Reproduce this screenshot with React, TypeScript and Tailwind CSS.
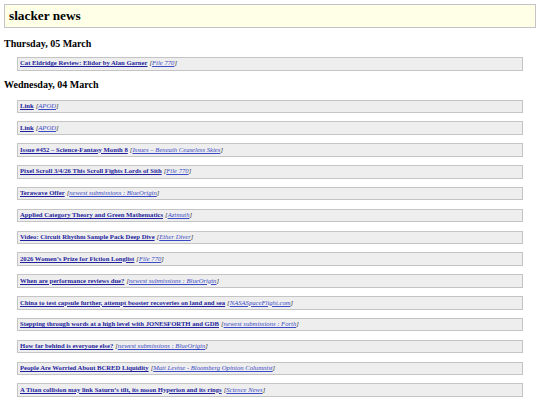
const thursday = [
  { title: "Cat Eldridge Review: Elidor by Alan Garner", source: "File 770" },
]

const wednesday = [
  { title: "Link", source: "APOD" },
  { title: "Link", source: "APOD" },
  { title: "Issue #452 – Science-Fantasy Month 8", source: "Issues – Beneath Ceaseless Skies" },
  { title: "Pixel Scroll 3/4/26 This Scroll Fights Lords of Sith", source: "File 770" },
  { title: "Terawave Offer", source: "newest submissions : BlueOrigin" },
  { title: "Applied Category Theory and Green Mathematics", source: "Azimuth" },
  { title: "Video: Circuit Rhythm Sample Pack Deep Dive", source: "Ether Diver" },
  { title: "2026 Women’s Prize for Fiction Longlist", source: "File 770" },
  { title: "When are performance reviews due?", source: "newest submissions : BlueOrigin" },
  { title: "China to test capsule further, attempt booster recoveries on land and sea", source: "NASASpaceFlight.com" },
  { title: "Stepping through words at a high level with JONESFORTH and GDB", source: "newest submissions : Forth" },
  { title: "How far behind is everyone else?", source: "newest submissions : BlueOrigin" },
  { title: "People Are Worried About BCRED Liquidity", source: "Matt Levine - Bloomberg Opinion Columnist" },
  { title: "A Titan collision may link Saturn’s tilt, its moon Hyperion and its rings", source: "Science News" },
]

function Item({ title, source }: { title: string; source: string }) {
  return (
    <div className="mx-[13px] h-[13.5px] flex items-center border border-[#c4c4c4] bg-[#eeeeee] pl-[2px] text-[6.67px] leading-none whitespace-nowrap overflow-hidden">
      <a href="#" className="font-bold text-[#1f1f9e] underline">{title}</a>
      <span className="italic text-[#333] ml-[2px]">
        [<a href="#" className="text-[#3a4ac4] underline">{source}</a>]
      </span>
    </div>
  )
}

export default function App() {
  return (
    <div className="w-[540px] h-[405px] overflow-hidden bg-white px-[4px] pt-[4px] font-['Liberation_Serif','Times_New_Roman',serif] text-black">
      <div className="h-[24px] border border-[#c4c4c4] bg-[#ffffe8] flex items-center pl-[4px]">
        <h1 className="text-[13.3px] font-bold leading-none">slacker news</h1>
      </div>

      <h2 className="mt-[10px] h-[12px] flex items-center text-[10px] font-bold leading-none">Thursday, 05 March</h2>
      <div className="mt-[7px] flex flex-col gap-[8.4px]">
        {thursday.map((it, i) => (
          <Item key={i} {...it} />
        ))}
      </div>

      <h2 className="mt-[8px] h-[12px] flex items-center text-[10px] font-bold leading-none">Wednesday, 04 March</h2>
      <div className="mt-[9px] flex flex-col gap-[8.35px]">
        {wednesday.map((it, i) => (
          <Item key={i} {...it} />
        ))}
      </div>
    </div>
  )
}
